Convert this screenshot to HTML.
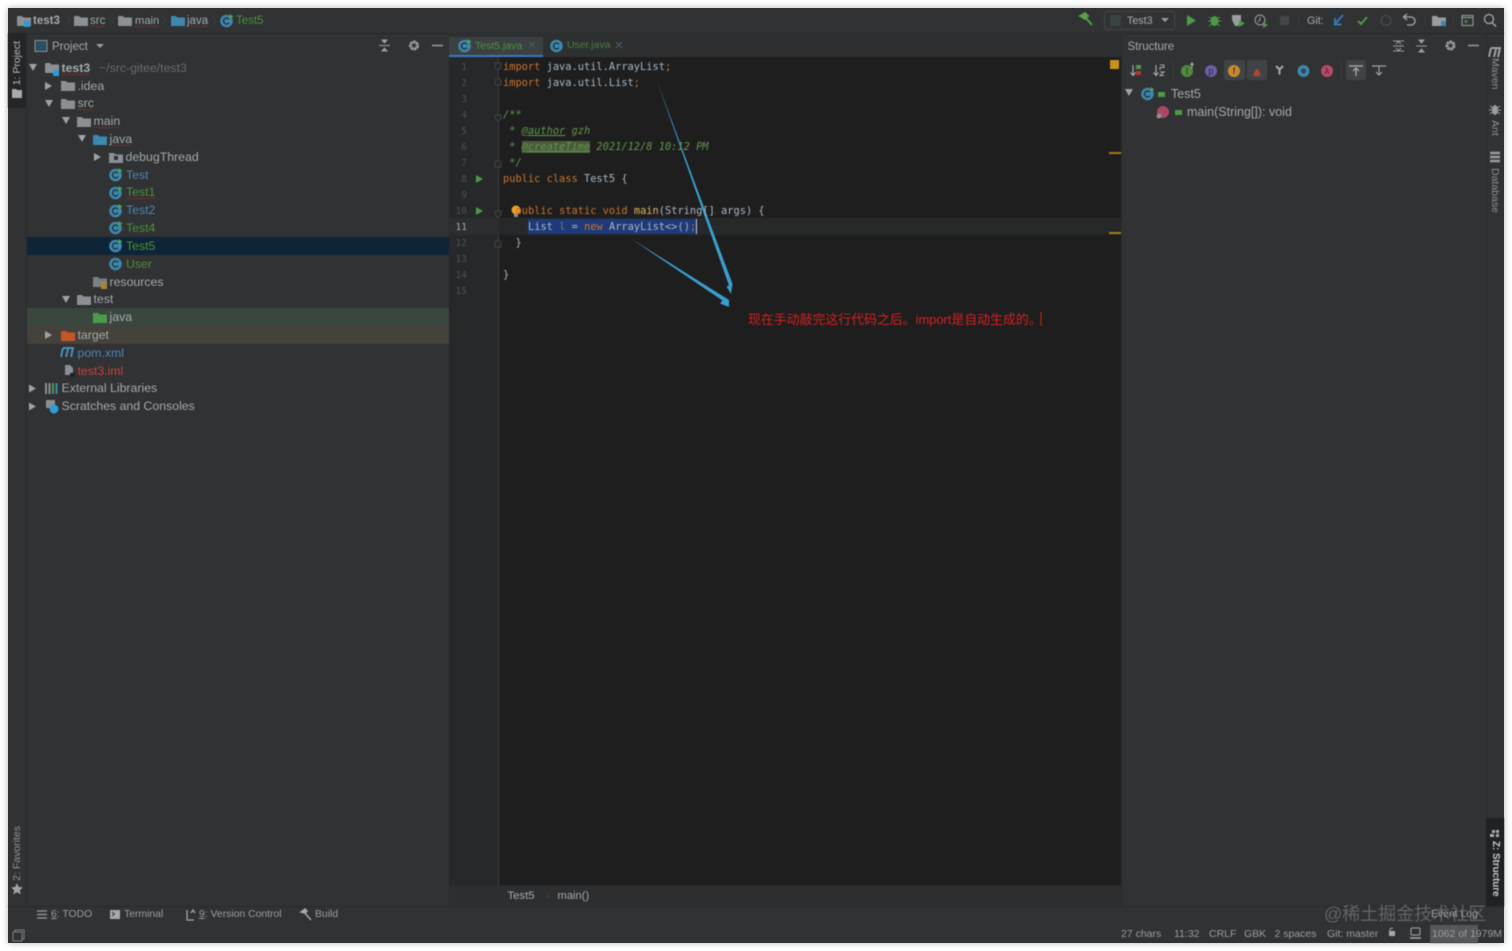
<!DOCTYPE html>
<html><head><meta charset="utf-8"><title>Test5</title>
<style>
html,body{margin:0;padding:0;background:#fff;width:1512px;height:951px;overflow:hidden}
#w{position:absolute;left:8px;top:8px;width:1496px;height:935px;background:#303234;box-shadow:0 0 6px rgba(0,0,0,.3)}
#r{position:absolute;left:0;top:0;width:1512px;height:951px;font:12.3px "Liberation Sans","Noto Sans CJK SC",sans-serif;color:#a6aaac;filter:blur(.5px)}
#r>*{position:absolute}
.t{white-space:nowrap;line-height:16px;height:16px;transform:translateY(-8px)}
.sq{text-decoration:underline dotted #a5322f 1px;text-underline-offset:2px}
.bl{color:#4e86ad}.gr{color:#4f8f3c}.rd{color:#c8403c}
.c{font:10.35px/16px "DejaVu Sans Mono",monospace;white-space:pre;color:#a9b7c6;height:16px}
.c b{font-weight:normal;color:#c4732f}.c em{color:#5f9650;font-style:italic}
.n{font:9.5px/16px "DejaVu Sans Mono",monospace;color:#4d5052;width:18px;text-align:right;left:449px}
.v{writing-mode:vertical-rl;white-space:nowrap;font-size:10.5px;line-height:14px}
.up{transform:rotate(180deg)}
.s{font-size:10.4px;white-space:nowrap;line-height:14px;color:#9a9ea0}
svg{overflow:visible}
</style></head><body>
<div id="w"></div>
<div id="r">
<!-- panels -->
<div style="left:8px;top:33px;width:1496px;height:1px;background:#28292b"></div>
<div style="left:8px;top:33px;width:18px;height:75px;background:#232527"></div>
<div style="left:26px;top:33px;width:1px;height:873px;background:#2a2c2e"></div>
<div style="left:449px;top:33px;width:672px;height:24px;background:#2d2f31"></div>
<div style="left:449px;top:37px;width:94px;height:18px;background:#3b4042"></div>
<div style="left:449px;top:55px;width:94px;height:2px;background:#3d78c0"></div>
<div style="left:449px;top:57px;width:50px;height:828px;background:#262829"></div>
<div style="left:499px;top:57px;width:622px;height:828px;background:#1e1e1e"></div>
<div style="left:449px;top:885px;width:672px;height:21px;background:#2c2e30"></div>
<div style="left:498px;top:57px;width:1px;height:828px;background:#3b3d3f"></div>
<div style="left:499px;top:885px;width:622px;height:1px;background:#2a2b2c"></div>
<div style="left:1121px;top:33px;width:1px;height:873px;background:#2a2c2e"></div>
<div style="left:1486px;top:33px;width:1px;height:873px;background:#2a2c2e"></div>
<div style="left:1486px;top:818px;width:18px;height:88px;background:#1f2123"></div>
<div style="left:8px;top:906px;width:1496px;height:1px;background:#2a2c2e"></div>
<div style="left:27px;top:237px;width:422px;height:17.5px;background:#0e2538"></div>
<div style="left:27px;top:308px;width:422px;height:18px;background:#3a473f"></div>
<div style="left:27px;top:326px;width:422px;height:18px;background:#44423a"></div>
<div style="left:499px;top:218px;width:622px;height:17px;background:#262829"></div>
<div style="left:449px;top:218px;width:50px;height:17px;background:#2c2e30"></div>
<div style="left:528px;top:219px;width:169px;height:15px;background:#1f3a78"></div>
<div style="left:696px;top:219px;width:1px;height:15px;background:#c8c8c8"></div>
<div style="left:1430px;top:925px;width:48px;height:18px;background:#55585a"></div>

<svg style="left:0;top:0" width="1512" height="951">
<defs>
<path id="f" d="M0 1h5l1.500 1.500H14V11H0z"/>
<g id="cls"><circle cx="6.500" cy="7" r="6.300" fill="#3f87ab"/><path d="M9 5.300A3 3 0 1 0 9 8.700" fill="none" stroke="#1f3440" stroke-width="1.400"/></g>
<g id="run"><use href="#cls"/><path d="M9.500 0l4 2.500-4 2.500z" fill="#4aa84a"/></g>
<path id="tr" d="M0 0l8 0-4 7z" fill="#a0a3a5"/>
<path id="tl" d="M0 0l7 4-7 4z" fill="#a0a3a5"/>
</defs>
<!-- breadcrumb icons -->
<use href="#f" x="17" y="15" fill="#8b9094"/><rect x="24" y="21" width="6" height="6" fill="#2f9bd8"/>
<path d="M66 14l4 6-4 6M110 14l4 6-4 6M161 14l4 6-4 6M212 14l4 6-4 6" fill="none" stroke="#3c3e40"/>
<use href="#f" x="74" y="15" fill="#8b9094"/><use href="#f" x="118" y="15" fill="#8b9094"/><use href="#f" x="171" y="15" fill="#3f88ad"/>
<use href="#run" x="220" y="14"/>
<!-- project header -->
<rect x="35" y="40.500" width="12" height="11" fill="#2b4f62" stroke="#8b9094"/>
<path d="M96 44h8l-4 4z" fill="#9a9ea0"/>
<path d="M379 45.500h11M382 40h5l-2.500 3zM382 51h5l-2.500-3z" stroke="#9a9ea0" fill="#9a9ea0" stroke-width="1"/>
<circle cx="414" cy="45.500" r="3.500" fill="none" stroke="#a0a4a6" stroke-width="3" stroke-dasharray="2.500 .6"/>
<path d="M432 45.500h11" stroke="#9a9ea0" stroke-width="1.500"/>
<!-- tree icons -->
<use href="#tr" x="29" y="64"/><use href="#f" x="45" y="62" fill="#8b9094"/><rect x="53" y="70" width="6" height="6" fill="#2f9bd8"/>
<use href="#tl" x="45" y="82"/><use href="#f" x="61" y="80" fill="#8b9094"/>
<use href="#tr" x="45" y="100"/><use href="#f" x="61" y="98" fill="#8b9094"/>
<use href="#tr" x="62" y="117"/><use href="#f" x="77" y="116" fill="#8b9094"/>
<use href="#tr" x="78" y="135"/><use href="#f" x="93" y="134" fill="#3f88ad"/>
<use href="#tl" x="94" y="153"/><use href="#f" x="109" y="152" fill="#8b9094"/><rect x="114" y="156" width="4" height="4" fill="#303234"/>
<use href="#run" x="109" y="168"/><use href="#run" x="109" y="186"/><use href="#run" x="109" y="204"/><use href="#run" x="109" y="221"/><use href="#run" x="109" y="239"/><use href="#cls" x="109" y="257"/>
<use href="#f" x="93" y="276" fill="#7b8084"/><rect x="101" y="282" width="6" height="7" fill="#a7843a"/>
<use href="#tr" x="62" y="296"/><use href="#f" x="77" y="294" fill="#8b9094"/>
<use href="#f" x="93" y="312" fill="#4c9a4c"/>
<use href="#tl" x="45" y="331"/><use href="#f" x="61" y="330" fill="#c5562a"/>
<path d="M64 348l-2 9M64 348h10l-2 9M69 349l-2 8" transform="translate(-1 0)" fill="none" stroke="#4d8dbb" stroke-width="2"/>
<path d="M65 365h5l3 3v7H65z" fill="#8b9094"/><rect x="70" y="373" width="5" height="4" fill="#1d1f20"/>
<use href="#tl" x="29" y="384.500"/><path d="M46 383v11M49.500 383v11" stroke="#8b9094" stroke-width="2"/><path d="M53 383v11" stroke="#4c9a4c" stroke-width="2"/><path d="M56.500 383v11" stroke="#3f88ad" stroke-width="2"/>
<use href="#tl" x="29" y="402.500"/><rect x="46" y="400" width="9" height="8" fill="#8b9094"/><circle cx="54" cy="409" r="4.500" fill="#2f9bd8"/>
<!-- left strip icons -->
<path d="M12 89h4l1 1h5v8H12z" fill="#a8abad"/>
<path d="M17 883l1.800 4 4.200.4-3.200 2.800 1 4.200-3.800-2.200-3.800 2.200 1-4.200-3.200-2.800 4.200-.4z" fill="#a0a3a5"/>
<rect x="15" y="930" width="9" height="9" fill="none" stroke="#7d8183"/><rect x="13" y="932" width="9" height="9" fill="#303234" stroke="#7d8183"/>
<!-- tab icons -->
<use href="#run" x="458" y="39"/><use href="#cls" x="550" y="39"/>
<path d="M529 42l6 6M535 42l-6 6M616 42l6 6M622 42l-6 6" stroke="#55595b"/>
<!-- gutter -->
<path d="M476 175l7 4-7 4zM476 207l7 4-7 4z" fill="#4f9a45"/>
<path d="M495 63h6v5l-3 2-3-2zM495 85h6v-5l-3-2-3 2zM495 115h6v4l-3 2-3-2zM495 167h6v-5l-3-2-3 2zM495 211h6v4l-3 2-3-2zM495 247h6v-5l-3-2-3 2z" fill="#262829" stroke="#404345"/>
<circle cx="516" cy="210" r="4.500" fill="#e5a12a"/><rect x="514" y="214" width="4" height="3" fill="#8b8d8f"/>
<!-- stripe marks -->
<rect x="1110" y="60" width="9" height="9" fill="#c8921c"/>
<rect x="1109" y="152" width="12" height="2" fill="#a57a18"/><rect x="1109" y="232" width="12" height="2" fill="#a57a18"/>
<!-- arrows -->
<path d="M657 81L732.500 284 731 294 726.500 286.500 729 285.500z" fill="#3a9fd0"/>
<path d="M630 238L729 300 729 307 720 303.500 722.500 300.500z" fill="#3a9fd0"/>
<path d="M1041 312v14" stroke="#d02020"/>
<!-- right top toolbar -->
<path d="M1080 16l5 -3 3 3-3 3zM1085 17l7 8" fill="#57a04c" stroke="#57a04c" stroke-width="1.800"/>
<rect x="1104.500" y="11.500" width="70" height="18" rx="2" fill="none" stroke="#44474a"/><rect x="1110" y="15" width="11" height="11" fill="#3a4246"/>
<path d="M1161 18h8l-4 4z" fill="#9a9ea0"/>
<path d="M1187 15l9 5.500-9 5.500z" fill="#4f9a45"/>
<ellipse cx="1214.500" cy="21" rx="4" ry="5" fill="#4f9a45"/><path d="M1209 17l3 2M1220 17l-3 2M1208 21h13M1209 26l3-2M1220 26l-3-2" stroke="#4f9a45"/>
<path d="M1232 15h9v5l-3 6h-3l-3-6z" fill="#9a9ea0"/><path d="M1239 20l6 3.500-6 3.500z" fill="#4f9a45"/>
<circle cx="1260" cy="20" r="5" fill="none" stroke="#9a9ea0"/><path d="M1260 17v3l-2 2" stroke="#9a9ea0" fill="none"/><path d="M1263 22l5 3-5 3z" fill="#4f9a45"/>
<rect x="1280" y="16" width="9" height="9" fill="#454749"/>
<path d="M1299 14v12M1425 14v12M1453 14v12" stroke="#3a3c3e"/>
<path d="M1343 15l-8 9M1335 18v6.500h6.500" fill="none" stroke="#3578b5" stroke-width="2"/>
<path d="M1358 21l3 3 6-7" fill="none" stroke="#4f9a45" stroke-width="2"/>
<circle cx="1386" cy="20.500" r="5" fill="none" stroke="#45484a" stroke-width="1.500"/>
<path d="M1404 17h7a4 4 0 0 1 0 8h-4M1407 14l-3.500 3 3.500 3" fill="none" stroke="#a6aaac" stroke-width="1.300"/>
<use href="#f" x="1432" y="15" fill="#9a9ea0"/><rect x="1441" y="21" width="5" height="5" fill="#3f88ad"/>
<rect x="1462" y="15.500" width="11" height="10" fill="#333a36" stroke="#9a9ea0"/><path d="M1462 17.500h11" stroke="#9a9ea0"/><path d="M1465 19.500l3 2-3 2z" fill="#4f9a45"/>
<circle cx="1489" cy="19" r="4.500" fill="none" stroke="#a6aaac" stroke-width="1.300"/><path d="M1492 22.500l4 4" stroke="#a6aaac" stroke-width="1.500"/>
<!-- structure header -->
<path d="M1393 41h11M1393 51h11M1393 46h11M1396 44l2.500-2.500 2.500 2.500M1396 48l2.500 2.500 2.500-2.500" fill="none" stroke="#9a9ea0"/>
<path d="M1416 46h11M1419 40h5l-2.500 3zM1419 52h5l-2.500-3z" stroke="#9a9ea0" fill="#9a9ea0"/>
<circle cx="1450.500" cy="45.500" r="3.500" fill="none" stroke="#a0a4a6" stroke-width="3" stroke-dasharray="2.500 .6"/>
<path d="M1468 45.500h11" stroke="#9a9ea0" stroke-width="1.500"/>
<!-- structure toolbar -->
<rect x="1224" y="60" width="21" height="20" rx="2" fill="#414446"/><rect x="1247" y="60" width="20" height="20" rx="2" fill="#414446"/><rect x="1346" y="60" width="20" height="20" rx="2" fill="#414446"/>
<path d="M1133 65v10M1130.500 72.500l2.500 3 2.500-3" fill="none" stroke="#a6aaac" stroke-width="1.200"/><rect x="1136" y="65" width="5" height="4" fill="#4f9a45"/><rect x="1136" y="71" width="5" height="4" fill="#b33"/>
<path d="M1156 65v10M1153.500 72.500l2.500 3 2.500-3" fill="none" stroke="#a6aaac" stroke-width="1.200"/><path d="M1160 65h4v2.500h-4v2.500M1160 72h4l-4 3.500h4" fill="none" stroke="#a6aaac"/>
<path d="M1173 60v20M1341 60v20" stroke="#3a3c3e"/>
<circle cx="1187" cy="71" r="6" fill="#4f8a3d"/><path d="M1192 63v5M1190.500 65l1.500-2 1.500 2" stroke="#b5b8ba" fill="none"/>
<circle cx="1211" cy="71" r="6" fill="#6d5fa8"/>
<circle cx="1234" cy="71" r="6" fill="#c98a2a"/>
<path d="M1254 72h6v4h-6zM1255 72a2 3 0 0 1 4 0" fill="#b5443a"/>
<path d="M1276 66l3.500 3.500 3.500-3.500M1279.500 69.500v5" stroke="#a6aaac" stroke-width="2" fill="none"/>
<circle cx="1303.500" cy="71" r="6" fill="#3f87ab"/><circle cx="1303.500" cy="71" r="2.500" fill="#24465a"/>
<circle cx="1327" cy="71" r="6" fill="#b84a6a"/>
<g font-family="Liberation Sans" font-size="9" text-anchor="middle" fill="#2a2a2a"><text x="1187" y="74">I</text><text x="1211" y="74">p</text><text x="1234" y="74">f</text><text x="1327" y="74">λ</text><text x="1163" y="115">m</text></g>
<path d="M1349 66h14M1356 76v-8M1353 71l3-3 3 3" fill="none" stroke="#b0b3b5" stroke-width="1.200"/>
<path d="M1372 66h14M1379 66v9M1376 72l3 3 3-3" fill="none" stroke="#a0a3a5" stroke-width="1.200"/>
<!-- structure tree -->
<use href="#tr" x="1125" y="89"/><use href="#run" x="1141" y="87"/><rect x="1158" y="92" width="7" height="5" fill="#4f9a45"/>
<circle cx="1163" cy="112" r="6" fill="#b84a6a" fill-opacity=".9"/><circle cx="1159" cy="116" r="2.500" fill="#8b8d8f"/><rect x="1175" y="110" width="7" height="5" fill="#4f9a45"/>
<!-- right strip icons -->
<path d="M1491 52l-2 9M1491 52h9l-2 9M1496 53l-2 8" fill="none" stroke="#a6aaac" stroke-width="1.800" transform="translate(0 -4)"/>
<ellipse cx="1495" cy="110" rx="3" ry="5" fill="#9a9ea0"/><path d="M1490 106l10 8M1500 106l-10 8M1489 110h12" stroke="#9a9ea0"/>
<path d="M1490 153h10M1490 157h10M1490 161h10" stroke="#9a9ea0" stroke-width="2.500"/>
<path d="M1492 830h3v3h-3zM1496 830h3v3h-3zM1496 834h3v3h-3zM1490 834h4v3h-4z" fill="#a6aaac"/>
<!-- bottom toolbar -->
<path d="M37 911h10M37 914.500h10M37 918h10" stroke="#9a9ea0" stroke-width="1.300"/>
<rect x="110" y="910" width="10" height="9" fill="#a6aaac"/><path d="M112 912l2.500 2-2.500 2" stroke="#303234" fill="none"/>
<path d="M187 910v10h7M191 913l2-3 2 3" fill="none" stroke="#a6aaac" stroke-width="1.300"/>
<path d="M301 912l4-3 2 2-2 2zM304 912l7 8" fill="#a6aaac" stroke="#a6aaac" stroke-width="1.500"/>
<!-- status icons -->
<path d="M1389 931h6v5h-6z" fill="#a6aaac"/><path d="M1390 931v-1.500a2 2 0 0 1 3 -1" fill="none" stroke="#a6aaac"/>
<rect x="1411" y="928" width="9" height="7" rx="1" fill="none" stroke="#a6aaac"/><path d="M1410 938h11" stroke="#a6aaac" stroke-width="1.500"/>
</svg>

<!-- breadcrumb text -->
<span class="t" style="left:33px;top:21px;font-size:11.500px;font-weight:bold;color:#a6aaac">test3</span>
<span class="t sq" style="left:90px;top:21px;font-size:11.500px">src</span>
<span class="t sq" style="left:135px;top:21px;font-size:11.200px">main</span>
<span class="t sq" style="left:187px;top:21px;font-size:11.500px">java</span>
<span class="t gr" style="left:236px;top:21px;font-size:11.500px">Test5</span>
<span class="t" style="left:52px;top:47px;font-size:11.500px">Project</span>
<!-- tree -->
<span class="t sq" style="left:61.500px;top:68px;font-weight:bold">test3</span><span class="t" style="left:99px;top:68px;color:#686c6e">~/src-gitee/test3</span>
<span class="t" style="left:77.500px;top:86px">.idea</span>
<span class="t sq" style="left:77.500px;top:103px">src</span>
<span class="t sq" style="left:93.500px;top:121px">main</span>
<span class="t sq" style="left:109.500px;top:139px">java</span>
<span class="t" style="left:125.500px;top:157px">debugThread</span>
<span class="t bl" style="left:126px;top:175px">Test</span>
<span class="t gr sq" style="left:126px;top:192px">Test1</span>
<span class="t bl" style="left:126px;top:210px">Test2</span>
<span class="t gr" style="left:126px;top:228px">Test4</span>
<span class="t gr" style="left:126px;top:246px">Test5</span>
<span class="t gr" style="left:126px;top:264px">User</span>
<span class="t" style="left:109.500px;top:282px">resources</span>
<span class="t" style="left:93.500px;top:299px">test</span>
<span class="t" style="left:109.500px;top:317px">java</span>
<span class="t" style="left:77.500px;top:335px">target</span>
<span class="t bl" style="left:77.500px;top:353px">pom.xml</span>
<span class="t rd" style="left:77.500px;top:371px">test3.iml</span>
<span class="t" style="left:61.500px;top:388px">External Libraries</span>
<span class="t" style="left:61.500px;top:406px">Scratches and Consoles</span>
<!-- left/right strips -->
<span class="v up" style="left:10px;top:41px;color:#b5b8ba">1: Project</span>
<span class="v up" style="left:10px;top:826px;color:#8e9294">2: Favorites</span>
<span class="v" style="left:1488px;top:58px;color:#8e9294">Maven</span>
<span class="v" style="left:1488px;top:120px;color:#8e9294">Ant</span>
<span class="v" style="left:1488px;top:168px;color:#8e9294">Database</span>
<span class="v" style="left:1488px;top:841px;color:#c8cbcd;font-weight:bold;font-size:9.800px">Z: Structure</span>
<!-- tabs -->
<span class="t gr" style="left:475px;top:46px;font-size:10.500px">Test5.java</span>
<span class="t gr" style="left:567px;top:46px;font-size:10.400px;color:#4a7f40">User.java</span>
<!-- line numbers -->
<span class="n" style="top:59.500px">1</span><span class="n" style="top:75.500px">2</span><span class="n" style="top:91.500px">3</span><span class="n" style="top:107.500px">4</span><span class="n" style="top:123.500px">5</span><span class="n" style="top:139.500px">6</span><span class="n" style="top:155.500px">7</span><span class="n" style="top:171.500px">8</span><span class="n" style="top:187.500px">9</span><span class="n" style="top:203.500px">10</span><span class="n" style="top:219.500px;color:#a6aaac">11</span><span class="n" style="top:235.500px">12</span><span class="n" style="top:251.500px">13</span><span class="n" style="top:267.500px">14</span><span class="n" style="top:283.500px">15</span>
<!-- code -->
<div class="c" style="left:503px;top:58.500px"><b>import</b> java.util.ArrayList<b>;</b></div>
<div class="c" style="left:503px;top:74.500px"><b>import</b> java.util.List<b>;</b></div>
<div class="c" style="left:503px;top:107px"><em>/**</em></div>
<div class="c" style="left:503px;top:122.500px"><em> * <u>@author</u> gzh</em></div>
<div class="c" style="left:503px;top:138.500px"><em> * <u style="background:#4a5a3a">@createTime</u> 2021/12/8 10:12 PM</em></div>
<div class="c" style="left:503px;top:155px"><em> */</em></div>
<div class="c" style="left:503px;top:170.500px"><b>public class</b> Test5 {</div>
<div class="c" style="left:515.500px;top:202.500px"><b>public static void</b> <span style="color:#e0b060">main</span>(String[] args) {</div>
<div class="c" style="left:528px;top:218.500px">List <span style="color:#6a7a8a">l</span> = <b>new</b> ArrayList&lt;&gt;()<b>;</b></div>
<div class="c" style="left:515.500px;top:234.500px">}</div>
<div class="c" style="left:503px;top:266.500px">}</div>
<span class="t" style="left:748px;top:319.500px;color:#d81e1e;font-size:12.900px;font-family:'Liberation Sans','Noto Sans CJK SC',sans-serif">现在手动敲完这行代码之后。import是自动生成的。</span>
<!-- editor breadcrumb -->
<span class="t" style="left:507.500px;top:896px;font-size:11.300px">Test5</span><span class="t" style="left:546px;top:896px;font-size:9px;color:#505356">›</span><span class="t" style="left:557.500px;top:896px;font-size:11.200px">main()</span>
<!-- toolbar text -->
<span class="t" style="left:1127px;top:21px;font-size:10.700px">Test3</span>
<span class="t" style="left:1307px;top:21px;font-size:10.700px">Git:</span>
<span class="t" style="left:1127.500px;top:47px;font-size:11.500px">Structure</span>
<span class="t" style="left:1171px;top:94px;font-size:12.500px">Test5</span>
<span class="t" style="left:1187px;top:112px;font-size:12.500px">main(String[]): void</span>
<!-- bottom text -->
<span class="t s" style="left:51px;top:915.500px"><u>6</u>: TODO</span>
<span class="t s" style="left:124px;top:915.500px">Terminal</span>
<span class="t s" style="left:199px;top:915.500px"><u>9</u>: Version Control</span>
<span class="t s" style="left:315px;top:915.500px">Build</span>
<span class="t s" style="left:1121px;top:934.500px;font-size:10.500px">27 chars</span>
<span class="t s" style="left:1174px;top:934.500px;font-size:10.500px">11:32</span>
<span class="t s" style="left:1209px;top:934.500px;font-size:10.500px">CRLF</span>
<span class="t s" style="left:1244px;top:934.500px;font-size:10.500px">GBK</span>
<span class="t s" style="left:1274.500px;top:934.500px;font-size:10.500px">2 spaces</span>
<span class="t s" style="left:1327px;top:934.500px;font-size:10.500px">Git: master</span>
<span class="t s" style="left:1432px;top:935px;font-size:10.500px">1062 of 1979M</span>
<span class="t s" style="left:1431px;top:915.500px;color:#a6aaac">Event Log</span>
<span class="t" style="left:1324px;top:914px;font-size:18px;color:rgba(120,124,126,.7);font-family:'Liberation Sans','Noto Sans CJK SC',sans-serif;line-height:20px;height:20px;transform:translateY(-10px)">@稀土掘金技术社区</span>
</div>
</body></html>
